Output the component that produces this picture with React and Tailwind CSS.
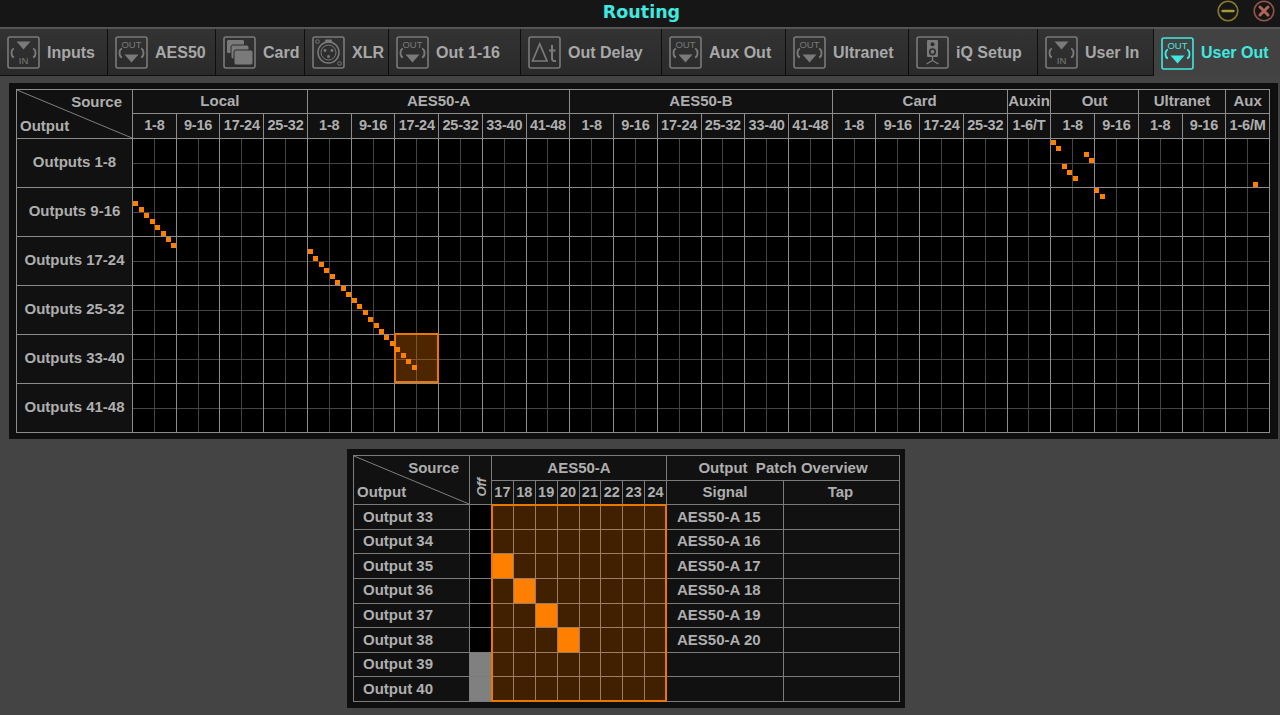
import React from "react";

const tabs = [
  { label: "Inputs", icon: "in", w: "w-[108px]" },
  { label: "AES50", icon: "out", w: "w-[108px]" },
  { label: "Card", icon: "card", w: "w-[89px]" },
  { label: "XLR", icon: "xlr", w: "w-[84px]" },
  { label: "Out 1-16", icon: "out", w: "w-[132px]" },
  { label: "Out Delay", icon: "delay", w: "w-[141px]" },
  { label: "Aux Out", icon: "out", w: "w-[124px]" },
  { label: "Ultranet", icon: "out", w: "w-[123px]" },
  { label: "iQ Setup", icon: "speaker", w: "w-[129px]" },
  { label: "User In", icon: "in", w: "w-[116px]" },
  { label: "User Out", icon: "out", w: "w-[126px]", active: true },
];

const sources = [
  { name: "Local", span: "col-span-4", ranges: ["1-8", "9-16", "17-24", "25-32"] },
  { name: "AES50-A", span: "col-span-6", ranges: ["1-8", "9-16", "17-24", "25-32", "33-40", "41-48"] },
  { name: "AES50-B", span: "col-span-6", ranges: ["1-8", "9-16", "17-24", "25-32", "33-40", "41-48"] },
  { name: "Card", span: "col-span-4", ranges: ["1-8", "9-16", "17-24", "25-32"] },
  { name: "Auxin", span: "col-span-1", ranges: ["1-6/T"] },
  { name: "Out", span: "col-span-2", ranges: ["1-8", "9-16"] },
  { name: "Ultranet", span: "col-span-2", ranges: ["1-8", "9-16"] },
  { name: "Aux", span: "col-span-1", ranges: ["1-6/M"] },
];

const outputRows = ["Outputs 1-8", "Outputs 9-16", "Outputs 17-24", "Outputs 25-32", "Outputs 33-40", "Outputs 41-48"];

// [source channel, output row], both counted from 0 over the 208 x 48 matrix
const OUT = 21 * 8;
const AUX = 25 * 8;
const patches = [
  ...Array.from({ length: 8 }, (_, i) => [i, 10 + i]),
  ...Array.from({ length: 20 }, (_, i) => [32 + i, 18 + i]),
  [OUT, 0], [OUT + 1, 1], [OUT + 6, 2], [OUT + 7, 3], [OUT + 2, 4], [OUT + 3, 5], [OUT + 4, 6], [OUT + 8, 8], [OUT + 9, 9],
  [AUX + 5, 7],
];

const detailRows = [
  { out: 33, on: -1, signal: "AES50-A 15" },
  { out: 34, on: -1, signal: "AES50-A 16" },
  { out: 35, on: 0, signal: "AES50-A 17" },
  { out: 36, on: 1, signal: "AES50-A 18" },
  { out: 37, on: 2, signal: "AES50-A 19" },
  { out: 38, on: 3, signal: "AES50-A 20" },
  { out: 39, on: -1, signal: "", off: true },
  { out: 40, on: -1, signal: "", off: true },
];

const TabIcon = ({ type }) => (
  <svg viewBox="0 0 33 33" className="w-[33px] h-[33px] shrink-0" fill="none" stroke="currentColor">
    <rect x="1" y="1" width="31" height="31" rx="2" strokeWidth="1.6" />
    {type === "in" && (
      <>
        <path d="M9.5 5.5h14l-7 8z" fill="currentColor" stroke="none" />
        <path d="M7 12.5C5 13 4.5 14 4.5 17s.5 4 2.5 4.5M26 12.5c2 .5 2.5 1.5 2.5 4.5s-.5 4-2.5 4.5" strokeWidth="1.8" />
        <text x="16.5" y="28" textAnchor="middle" fontSize="9.5" fontWeight="400" fill="currentColor" stroke="none">IN</text>
      </>
    )}
    {type === "out" && (
      <>
        <text x="16.5" y="11.5" textAnchor="middle" fontSize="9.5" fontWeight="400" fill="currentColor" stroke="none">OUT</text>
        <path d="M7 12.5C5 13 4.5 14 4.5 17s.5 4 2.5 4.5M26 12.5c2 .5 2.5 1.5 2.5 4.5s-.5 4-2.5 4.5" strokeWidth="1.8" />
        <path d="M9.5 18.5h14l-7 8z" fill="currentColor" stroke="none" />
      </>
    )}
    {type === "card" && (
      <g fill="currentColor" stroke="#2e2e2e" strokeWidth="1">
        <rect x="3.5" y="3.5" width="18" height="14" rx="2" />
        <rect x="8" y="9" width="18" height="14" rx="2" />
        <rect x="11" y="14" width="19" height="15" rx="2" />
      </g>
    )}
    {type === "xlr" && (
      <>
        <path d="M12.5 6.5l1-3h6l1 3z" fill="currentColor" stroke="none" />
        <circle cx="16.5" cy="16.5" r="10.5" strokeWidth="1.5" />
        <circle cx="16.5" cy="16.5" r="7.5" strokeWidth="1" />
        <circle cx="5.5" cy="5.5" r="1.8" strokeWidth="1" />
        <circle cx="27.5" cy="27.5" r="1.8" strokeWidth="1" />
        <g fill="currentColor" stroke="none">
          <circle cx="13" cy="14.5" r="1.4" />
          <circle cx="20" cy="14.5" r="1.4" />
          <circle cx="16.5" cy="20.5" r="1.4" />
        </g>
      </>
    )}
    {type === "delay" && (
      <>
        <path d="M4.5 25L11.7 8l7.3 17z" strokeWidth="1.7" />
        <path d="M24 9v13.5q0 2.5 2.5 2.5H28M21 14.5h6.5" strokeWidth="2" />
      </>
    )}
    {type === "speaker" && (
      <>
        <rect x="11" y="4" width="11" height="17" rx="1" fill="currentColor" stroke="none" />
        <circle cx="16.5" cy="8.3" r="2" fill="#2e2e2e" stroke="none" />
        <circle cx="16.5" cy="15.8" r="3.6" fill="#2e2e2e" stroke="none" />
        <circle cx="16.5" cy="15.8" r="2" fill="currentColor" stroke="none" />
        <path d="M16.5 21v3.5M16.5 24.5l-6 3.5M16.5 24.5l6 3.5" strokeWidth="1.4" />
      </>
    )}
  </svg>
);

const Tab = ({ tab }) => (
  <div
    className={`${tab.w} h-full flex items-center gap-[7px] pl-[7px] pt-[1px] text-[16px] font-bold whitespace-nowrap ${
      tab.active
        ? "bg-[#424242] text-[#3fe9e0] rounded-tl-[3px]"
        : "bg-gradient-to-b from-[#333333] to-[#2a2a2a] border-r border-b border-[#0e0e0e] text-[#a8a8a8]"
    }`}
  >
    <span className={tab.active ? "text-[#3fe9e0]" : "text-[#7a7a7a]"}>
      <TabIcon type={tab.icon} />
    </span>
    {tab.label}
  </div>
);

const Corner = ({ className }) => (
  <div className={`relative bg-[#111111] flex flex-col justify-between px-[3px] py-[3px] ${className}`}>
    <svg className="absolute inset-0 w-full h-full" viewBox="0 0 100 100" preserveAspectRatio="none">
      <line x1="0" y1="0" x2="100" y2="100" stroke="#808080" strokeWidth="1" vectorEffect="non-scaling-stroke" />
    </svg>
    <span className="self-end pr-[7px] leading-[18px]">Source</span>
    <span className="self-start leading-[18px]">Output</span>
  </div>
);

const HeadCell = ({ children, className = "" }) => (
  <div className={`bg-[#111111] flex items-center justify-center whitespace-nowrap ${className}`}>{children}</div>
);

const MatrixGroup = () => (
  <div className="bg-[#444444] grid grid-cols-2 grid-rows-2 gap-px">
    <div className="bg-black" />
    <div className="bg-black" />
    <div className="bg-black" />
    <div className="bg-black" />
  </div>
);

const RoutingMatrix = () => (
  <div className="w-[1254px] h-[344px] bg-[#8c8c8c] p-px gap-px grid grid-cols-[115px_repeat(26,minmax(0,1fr))] grid-rows-[23px_24px_minmax(0,1fr)] text-[#aeaeae] text-[15px] font-bold">
    <Corner className="row-span-2" />
    {sources.map((s) => (
      <HeadCell key={s.name} className={s.span}>{s.name}</HeadCell>
    ))}
    {sources.flatMap((s) =>
      s.ranges.map((r, i) => (
        <HeadCell key={s.name + i} className="text-[14.5px] tracking-[-0.2px]">{r}</HeadCell>
      )),
    )}
    <div className="grid grid-rows-6 gap-px">
      {outputRows.map((row) => (
        <div key={row} className="bg-[#111111] flex items-center justify-center pb-[2px]">{row}</div>
      ))}
    </div>
    <div className="col-[2/-1] relative grid grid-cols-subgrid grid-rows-6 gap-y-px">
      {outputRows.flatMap((row) => Array.from({ length: 26 }, (_, i) => <MatrixGroup key={row + i} />))}
      <div
        className="absolute -ml-px -mt-px bg-[#ff8000]/30 border-2 border-[#e87800]"
        style={{
          left: `${(6 / 26) * 100}%`,
          top: `${(4 / 6) * 100}%`,
          width: `calc(${100 / 26}% + 1px)`,
          height: `calc(${100 / 6}% + 1px)`,
        }}
      />
      {patches.map(([x, y]) => (
        <span
          key={`${x}-${y}`}
          className="absolute w-[5px] h-[5px] -ml-[2.5px] -mt-[2.5px] bg-[#ff8000]"
          style={{ left: `${((x + 0.5) / 208) * 100}%`, top: `${((y + 0.5) / 48) * 100}%` }}
        />
      ))}
    </div>
  </div>
);

const PatchDetail = () => (
  <div className="w-[547px] h-[247px] bg-[#7c7c7c] p-px gap-px grid grid-cols-[115px_21px_repeat(8,minmax(0,1fr))_116px_115px] grid-rows-[24px_23px_minmax(0,1fr)] text-[#aeaeae] text-[15px] font-bold">
    <Corner className="row-span-2" />
    <HeadCell className="row-span-2 italic text-[13px]">
      <span className="[writing-mode:vertical-rl] rotate-180 translate-y-[7px] translate-x-px">Off</span>
    </HeadCell>
    <HeadCell className="col-span-8">AES50-A</HeadCell>
    <HeadCell className="col-span-2">Output&nbsp; Patch Overview</HeadCell>
    {[17, 18, 19, 20, 21, 22, 23, 24].map((n) => (
      <HeadCell key={n} className="text-[14.5px]">{n}</HeadCell>
    ))}
    <HeadCell>Signal</HeadCell>
    <HeadCell className="pr-[2px]">Tap</HeadCell>
    <div className="grid grid-rows-8 gap-px">
      {detailRows.map((r) => (
        <div key={r.out} className="bg-[#111111] flex items-center pl-[9px]">Output {r.out}</div>
      ))}
    </div>
    <div className="grid grid-rows-8 gap-px">
      {detailRows.map((r) => (
        <div key={r.out} className={r.off ? "bg-[#808080]" : "bg-black"} />
      ))}
    </div>
    <div className="col-span-8 relative grid grid-cols-subgrid grid-rows-8 gap-y-px">
      {detailRows.flatMap((r) =>
        Array.from({ length: 8 }, (_, i) => (
          <div key={`${r.out}-${i}`} className={i === r.on ? "bg-[#ff8000]" : "bg-black"} />
        )),
      )}
      <div className="absolute -inset-px bg-[#ff8000]/25 border-2 border-[#e87800]" />
    </div>
    <div className="grid grid-rows-8 gap-px">
      {detailRows.map((r) => (
        <div key={r.out} className="bg-[#111111] flex items-center pl-[10px]">{r.signal}</div>
      ))}
    </div>
    <div className="grid grid-rows-8 gap-px">
      {detailRows.map((r) => (
        <div key={r.out} className="bg-[#111111]" />
      ))}
    </div>
  </div>
);

export default function App() {
  return (
    <div className="w-[1280px] h-[715px] overflow-hidden bg-[#444444] flex flex-col font-['Liberation_Sans',Arial,sans-serif]">
      <div className="h-[27px] shrink-0 bg-[#161616] grid grid-cols-[1fr_auto_1fr] items-center">
        <div />
        <div className="font-['DejaVu_Sans',sans-serif] font-bold text-[17.5px] text-[#3fe9e0] pl-[3px] -mt-[3px]">Routing</div>
        <div className="flex justify-end items-center gap-[14px] pr-[5px] -mt-[5px]">
          <svg viewBox="0 0 22 22" className="w-[22px] h-[22px]" fill="none">
            <circle cx="11" cy="11" r="9.8" stroke="#85792b" strokeWidth="1.6" />
            <path d="M5.5 11h11" stroke="#a89838" strokeWidth="2.4" strokeLinecap="round" />
          </svg>
          <svg viewBox="0 0 22 22" className="w-[22px] h-[22px]" fill="none">
            <circle cx="11" cy="11" r="9.8" stroke="#93544a" strokeWidth="1.6" />
            <path d="M7 7l8 8M15 7l-8 8" stroke="#b06558" strokeWidth="3" strokeLinecap="round" />
          </svg>
        </div>
      </div>
      <div className="h-[2px] shrink-0 bg-[#555555]" />
      <div className="h-[47px] shrink-0 flex">
        {tabs.map((t) => (
          <Tab key={t.label} tab={t} />
        ))}
      </div>
      <div className="mt-[7px] ml-[9px] w-[1269px] h-[356px] shrink-0 bg-[#0f0f0f] pl-[7px] pt-[6px]">
        <RoutingMatrix />
      </div>
      <div className="mt-[10px] mx-auto -translate-x-[14px] w-[558px] h-[259px] shrink-0 bg-[#0f0f0f] pl-[6px] pt-[6px]">
        <PatchDetail />
      </div>
    </div>
  );
}
